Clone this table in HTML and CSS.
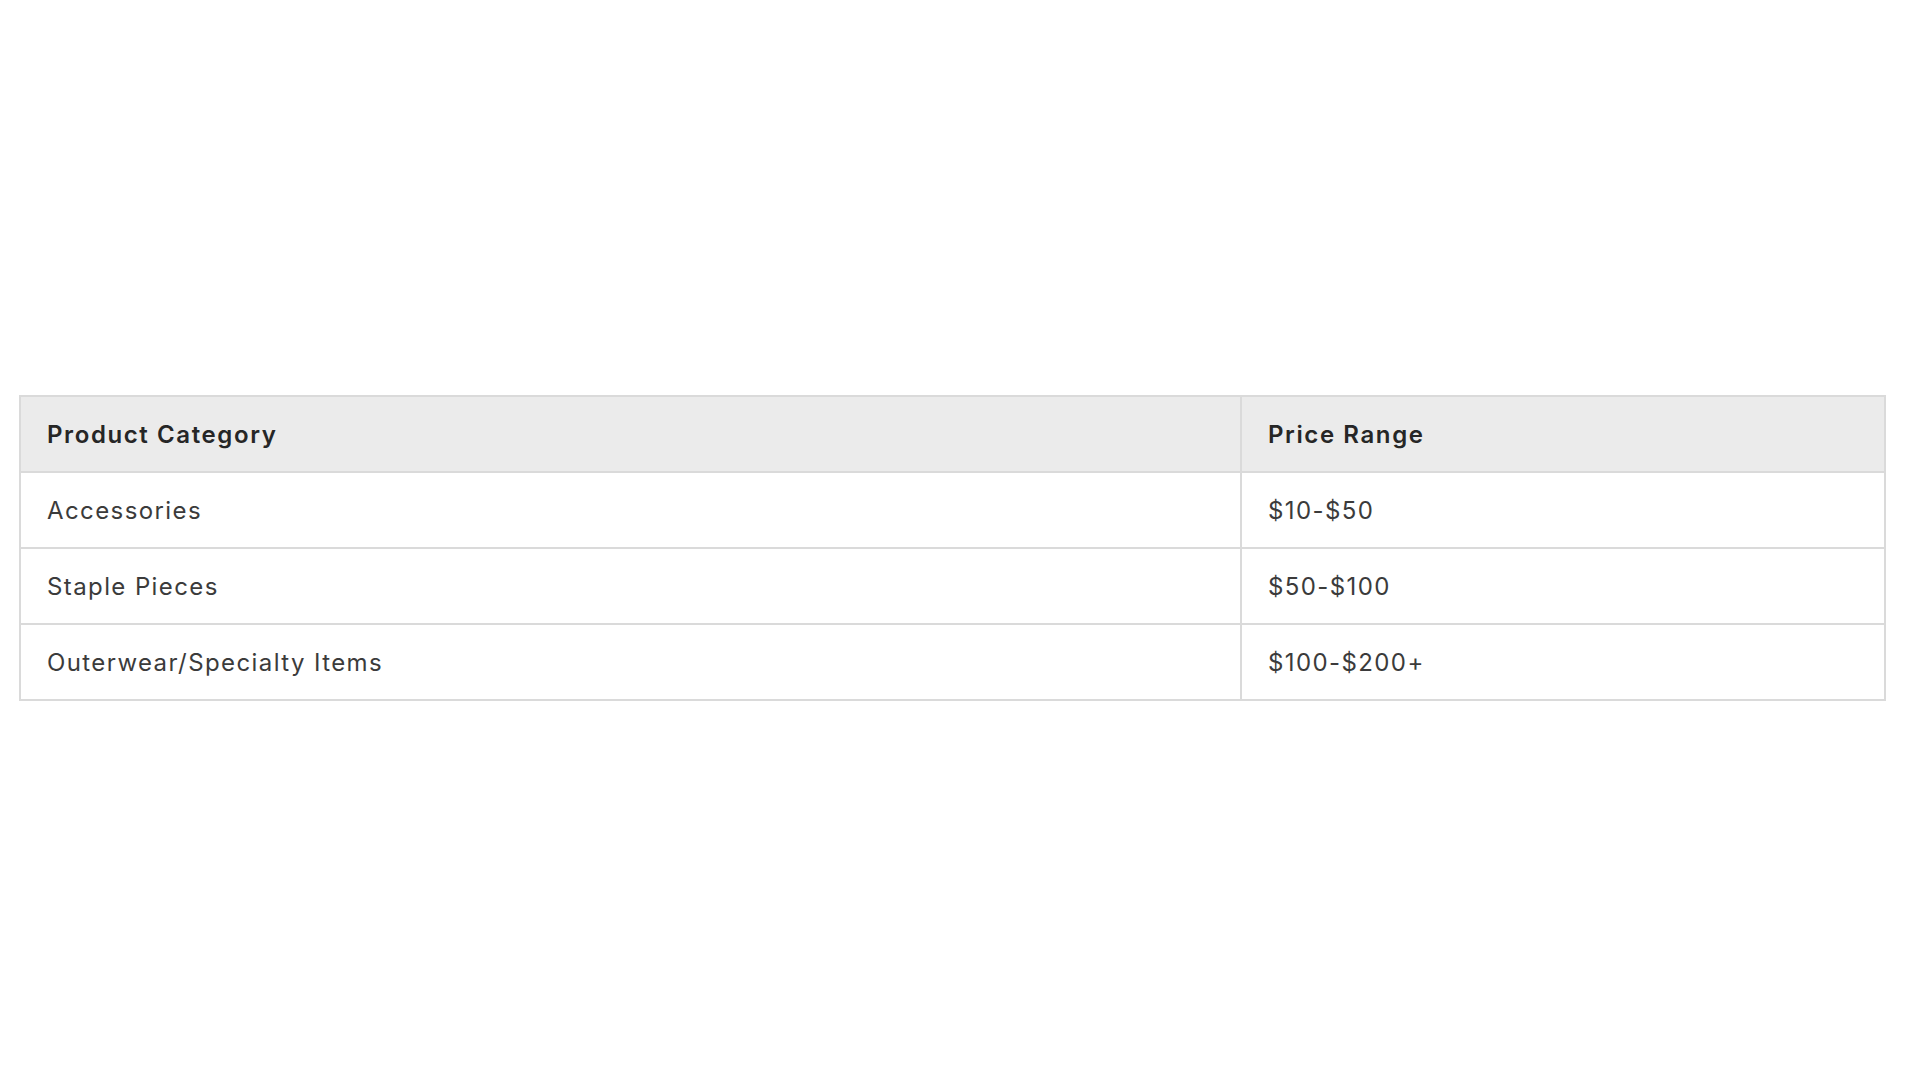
FILE: index.html
```html
<!DOCTYPE html>
<html lang="en">
<head>
<meta charset="utf-8">
<title>Price Ranges</title>
<link rel="stylesheet" href="styles.css">
</head>
<body>
<main class="page">
  <table class="price-table">
    <colgroup>
      <col class="col-cat">
      <col class="col-price">
    </colgroup>
    <thead>
      <tr>
        <th>Product Category</th>
        <th>Price Range</th>
      </tr>
    </thead>
    <tbody>
      <tr><td>Accessories</td><td>$10-$50</td></tr>
      <tr><td>Staple Pieces</td><td>$50-$100</td></tr>
      <tr><td>Outerwear/Specialty Items</td><td>$100-$200+</td></tr>
    </tbody>
  </table>
</main>
</body>
</html>
```
FILE: styles.css
```css
html, body {
  margin: 0;
  padding: 0;
  background: #ffffff;
}
.page {
  padding: 395px 34px 0 19px;
  font-family: Inter, "Noto Sans", sans-serif;
}
.price-table {
  width: 100%;
  border-collapse: collapse;
  table-layout: fixed;
  font-size: 24px;
  letter-spacing: 1.4px;
  color: #3b3b3b;
}
.col-cat { width: 1221px; }
.price-table th,
.price-table td {
  box-sizing: border-box;
  border: 2px solid #dadada;
  height: 76px;
  padding: 0 26px;
  text-align: left;
  vertical-align: middle;
}
.price-table th {
  background: #ebebeb;
  font-weight: 600;
  color: #262626;
  letter-spacing: 1.6px;
}
.price-table td {
  font-weight: 400;
}
```
